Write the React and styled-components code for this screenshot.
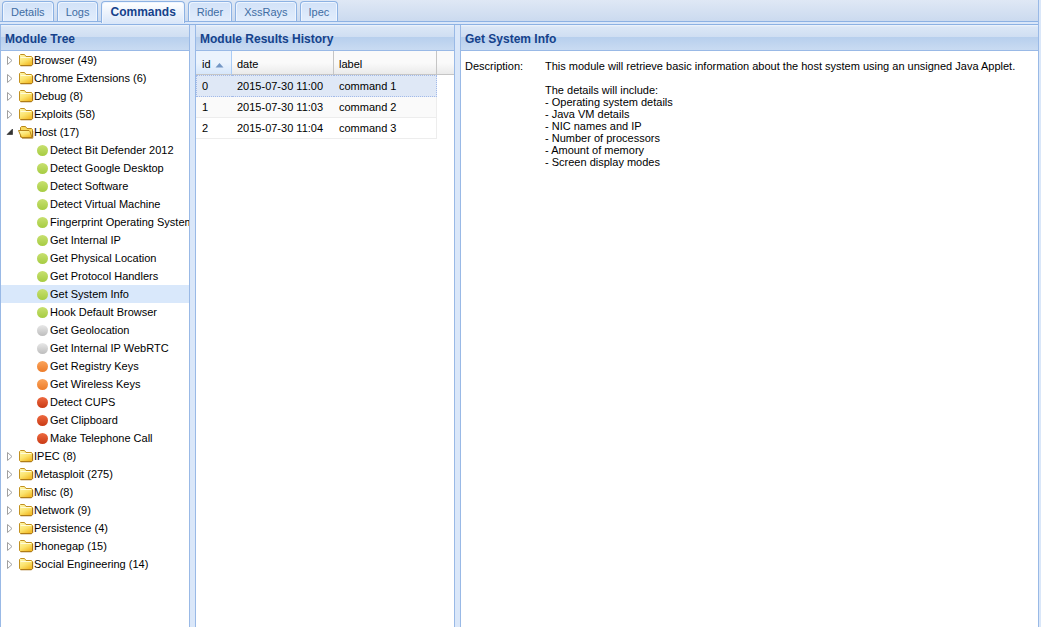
import React, { useState } from 'react';
import styled, { createGlobalStyle, css } from 'styled-components';

const GlobalStyle = createGlobalStyle`
  * {
      box-sizing: border-box;
  }

  body {
      margin: 0;
      background-color: #dae7f9;
      color: #000;
      font-family: "Liberation Sans", Arial, sans-serif;
      font-size: 11px;
  }

  button {
      font: inherit;
      color: inherit;
      cursor: pointer;
  }
`;

const tabs = ['Details', 'Logs', 'Commands', 'Rider', 'XssRays', 'Ipec'];

const hostModules = [
  ['Detect Bit Defender 2012', 'green'],
  ['Detect Google Desktop', 'green'],
  ['Detect Software', 'green'],
  ['Detect Virtual Machine', 'green'],
  ['Fingerprint Operating System', 'green'],
  ['Get Internal IP', 'green'],
  ['Get Physical Location', 'green'],
  ['Get Protocol Handlers', 'green'],
  ['Get System Info', 'green'],
  ['Hook Default Browser', 'green'],
  ['Get Geolocation', 'grey'],
  ['Get Internal IP WebRTC', 'grey'],
  ['Get Registry Keys', 'orange'],
  ['Get Wireless Keys', 'orange'],
  ['Detect CUPS', 'red'],
  ['Get Clipboard', 'red'],
  ['Make Telephone Call', 'red'],
];

const folders = [
  { name: 'Browser', count: 49 },
  { name: 'Chrome Extensions', count: 6 },
  { name: 'Debug', count: 8 },
  { name: 'Exploits', count: 58 },
  { name: 'Host', count: 17, modules: hostModules },
  { name: 'IPEC', count: 8 },
  { name: 'Metasploit', count: 275 },
  { name: 'Misc', count: 8 },
  { name: 'Network', count: 9 },
  { name: 'Persistence', count: 4 },
  { name: 'Phonegap', count: 15 },
  { name: 'Social Engineering', count: 14 },
];

const history = [
  { id: 0, date: '2015-07-30 11:00', label: 'command 1' },
  { id: 1, date: '2015-07-30 11:03', label: 'command 2' },
  { id: 2, date: '2015-07-30 11:04', label: 'command 3' },
];

const details = [
  'Operating system details',
  'Java VM details',
  'NIC names and IP',
  'Number of processors',
  'Amount of memory',
  'Screen display modes',
];

const statusColors = {
  green: ['#c8e070', '#a6cc42'],
  grey: ['#e8e8e8', '#bdbdbd'],
  orange: ['#fba45c', '#ec7c2a'],
  red: ['#ee6a40', '#c93a15'],
};

const Page = styled.div`
  height: 100vh;
  display: flex;
  flex-direction: column;
  padding-right: 2px;
`;

const TabBar = styled.div`
  flex: none;
  height: 25px;
  padding: 1px 2px 0;
  display: flex;
  align-items: flex-start;
  gap: 3px;
  border-right: 1px solid #99b9e6;
  background: linear-gradient(#dfe8f5, #cbdaef 21px, #8db2e3 21px, #8db2e3 22px, #dae7f9 22px, #dae7f9 24px, #8db2e3 24px);
`;

const Tab = styled.button`
  height: 20px;
  padding: 0 8px;
  border: 1px solid #8db2e3;
  border-bottom: none;
  border-radius: 4px 4px 0 0;
  background: linear-gradient(#d2e2f8, #e2edfc);
  box-shadow: inset 1px 1px 0 #eef5ff, inset -1px 0 0 #eef5ff;
  color: #416da3;
  white-space: nowrap;

  ${props => props.$active && css`
      height: 22px;
      padding-bottom: 2px;
      background: linear-gradient(#fff, #dae7f9);
      color: #15428b;
      font-weight: bold;
      font-size: 12px;
  `}
`;

const Workspace = styled.main`
  flex: 1;
  min-height: 0;
  display: grid;
  grid-template-columns: 190px 260px 1fr;
  column-gap: 5px;
`;

const Panel = styled.section`
  min-width: 0;
  display: flex;
  flex-direction: column;
  border: 1px solid #99b9e6;
  border-width: 0 1px;
  background-color: #fff;
  overflow: hidden;
`;

const PanelTitle = styled.h2`
  flex: none;
  height: 26px;
  margin: 0;
  padding: 2px 4px 0;
  border-bottom: 1px solid #99b9e6;
  background: linear-gradient(#eff5fd, #dbe7f6 2px, #cfdef2 12px, #b7cfed 12px, #c9dbf2);
  color: #15428b;
  font-size: 12px;
  font-weight: bold;
  line-height: 24px;
  white-space: nowrap;
`;

const TreeList = styled.ul`
  margin: 0;
  padding: 0;
  list-style: none;
`;

const TreeRow = styled.button`
  width: 100%;
  height: 18px;
  padding: 0 0 0 ${props => (props.$leaf ? 36 : 4)}px;
  display: flex;
  align-items: center;
  border: none;
  background-color: ${props => (props.$selected ? '#d9e8fb' : 'transparent')};
  text-align: left;
  white-space: nowrap;

  svg {
      flex: none;
  }
`;

const StatusDot = styled.span`
  flex: none;
  width: 11px;
  height: 11px;
  margin-right: 2px;
  border-radius: 50%;
  background: linear-gradient(${props => statusColors[props.$status].join(', ')});
`;

const HistoryBody = styled.div`
  flex: 1;
  background: linear-gradient(#fafafa 50%, #eaeaea 23px, #c5c5c5 23px) top / 100% 24px no-repeat;
`;

const Grid = styled.table`
  width: 241px;
  table-layout: fixed;
  border-collapse: separate;
  border-spacing: 0;

  th {
      height: 24px;
      padding: 3px 5px 0;
      border-right: 1px solid #c5c5c5;
      border-bottom: 1px solid #c5c5c5;
      font-weight: normal;
      text-align: left;
  }

  th.sorted {
      padding-left: 6px;
      background: linear-gradient(#ebf3fd 50%, #d6e6fa);
      border-right-color: #aaccf6;
  }

  th svg {
      margin-left: 1px;
  }

  td {
      height: 21px;
      padding: 0 5px;
      border-bottom: 1px solid #ededed;
      background-color: #fff;
  }

  td:first-child {
      padding-left: 6px;
  }

  td:last-child {
      border-right: 1px solid #ededed;
  }

  tr:nth-child(even) td {
      background-color: #fafafa;
  }

  tr.selected td {
      height: 22px;
      border-top: 1px dotted #a3bae9;
      border-bottom: 1px dotted #a3bae9;
      background-color: #dfe8f6;
  }

  tr.selected td:first-child {
      border-left: 1px dotted #a3bae9;
      padding-left: 5px;
  }

  tr.selected td:last-child {
      border-right: 1px dotted #a3bae9;
  }
`;

const Fields = styled.dl`
  margin: 0;
  padding: 9px 4px;
  display: grid;
  grid-template-columns: 80px 1fr;
  line-height: 12px;

  dd {
      margin: 0;
  }

  p {
      margin: 0 0 12px;
  }

  ul {
      margin: 0;
      padding: 0;
      list-style: none;
  }
`;

function Arrow({ open }) {
  return (
    <svg width="13" height="16" viewBox="0 0 13 16" aria-hidden="true">
      {open
        ? <path d="M7.500 5v5.500H2z" fill="#333" stroke="#222" strokeWidth=".6" />
        : <path d="M2.500 4.500v8l4.500-4z" fill="#fff" stroke="#a0a0a0" />}
    </svg>
  );
}

function Folder({ open }) {
  return (
    <svg width="16" height="16" viewBox="0 0 16 16" aria-hidden="true">
      <defs>
        <linearGradient id="folder" x1="0" y1="0" x2=".6" y2="1">
          <stop offset="0" stopColor="#fff9b4" />
          <stop offset=".6" stopColor="#fbe36c" />
          <stop offset="1" stopColor="#f3bd2c" />
        </linearGradient>
      </defs>
      {open ? (
        <g stroke="#b9861a" strokeLinejoin="round">
          <path d="M2.500 13V3.500l1-1h4l1.500 2h4.500l1 1V13z" fill="#f8d95c" />
          <path d="M.5 6.500h10.500l1 1 2 6H3.500z" fill="url(#folder)" />
          <path d="M4 14.200h10.800V7" fill="none" stroke="#9a6a12" strokeWidth=".8" />
        </g>
      ) : (
        <g stroke="#c2901f" strokeLinejoin="round">
          <path d="M1.500 12.500v-9l1-1h4l1.500 2h5.500l1 1v7l-1 1h-11z" fill="url(#folder)" />
          <path d="M2.500 5.500h10.500" stroke="#fffbd8" />
          <path d="M2.500 13.800h11l1.200-1.300V6" fill="none" stroke="#a06c12" strokeWidth=".8" />
        </g>
      )}
    </svg>
  );
}

function SortIcon() {
  return (
    <svg width="9" height="5" viewBox="0 0 9 5" aria-hidden="true">
      <path d="M4.500 0l4 4.500h-8z" fill="#7396c4" />
    </svg>
  );
}

function ModuleTree({ selected, onSelect }) {
  const [opened, setOpened] = useState('Host');

  return (
    <TreeList>
      {folders.map(folder => {
        const open = opened === folder.name;
        return (
          <li key={folder.name}>
            <TreeRow aria-expanded={open} onClick={() => setOpened(open ? '' : folder.name)}>
              <Arrow open={open} />
              <Folder open={open} />
              {folder.name} ({folder.count})
            </TreeRow>
            {open && folder.modules && (
              <TreeList>
                {folder.modules.map(([name, status]) => (
                  <li key={name}>
                    <TreeRow $leaf $selected={selected === name} onClick={() => onSelect(name)}>
                      <StatusDot $status={status} />
                      {name}
                    </TreeRow>
                  </li>
                ))}
              </TreeList>
            )}
          </li>
        );
      })}
    </TreeList>
  );
}

function ResultsHistory() {
  return (
    <HistoryBody>
      <Grid>
        <colgroup>
          <col style={{ width: 36 }} />
          <col style={{ width: 102 }} />
          <col />
        </colgroup>
        <thead>
          <tr>
            <th className="sorted">id <SortIcon /></th>
            <th>date</th>
            <th>label</th>
          </tr>
        </thead>
        <tbody>
          {history.map(row => (
            <tr key={row.id} className={row.id === 0 ? 'selected' : ''}>
              <td>{row.id}</td>
              <td>{row.date}</td>
              <td>{row.label}</td>
            </tr>
          ))}
        </tbody>
      </Grid>
    </HistoryBody>
  );
}

export default function App() {
  const [tab, setTab] = useState('Commands');
  const [module, setModule] = useState('Get System Info');

  return (
    <Page>
      <GlobalStyle />
      <TabBar role="tablist">
        {tabs.map(name => (
          <Tab
            key={name}
            role="tab"
            aria-selected={tab === name}
            $active={tab === name}
            onClick={() => setTab(name)}
          >
            {name}
          </Tab>
        ))}
      </TabBar>
      <Workspace>
        <Panel>
          <PanelTitle>Module Tree</PanelTitle>
          <ModuleTree selected={module} onSelect={setModule} />
        </Panel>
        <Panel>
          <PanelTitle>Module Results History</PanelTitle>
          <ResultsHistory />
        </Panel>
        <Panel>
          <PanelTitle>{module}</PanelTitle>
          <Fields>
            <dt>Description:</dt>
            <dd>
              <p>
                This module will retrieve basic information about the host system using an unsigned Java Applet.
              </p>
              The details will include:
              <ul>
                {details.map(line => <li key={line}>- {line}</li>)}
              </ul>
            </dd>
          </Fields>
        </Panel>
      </Workspace>
    </Page>
  );
}
